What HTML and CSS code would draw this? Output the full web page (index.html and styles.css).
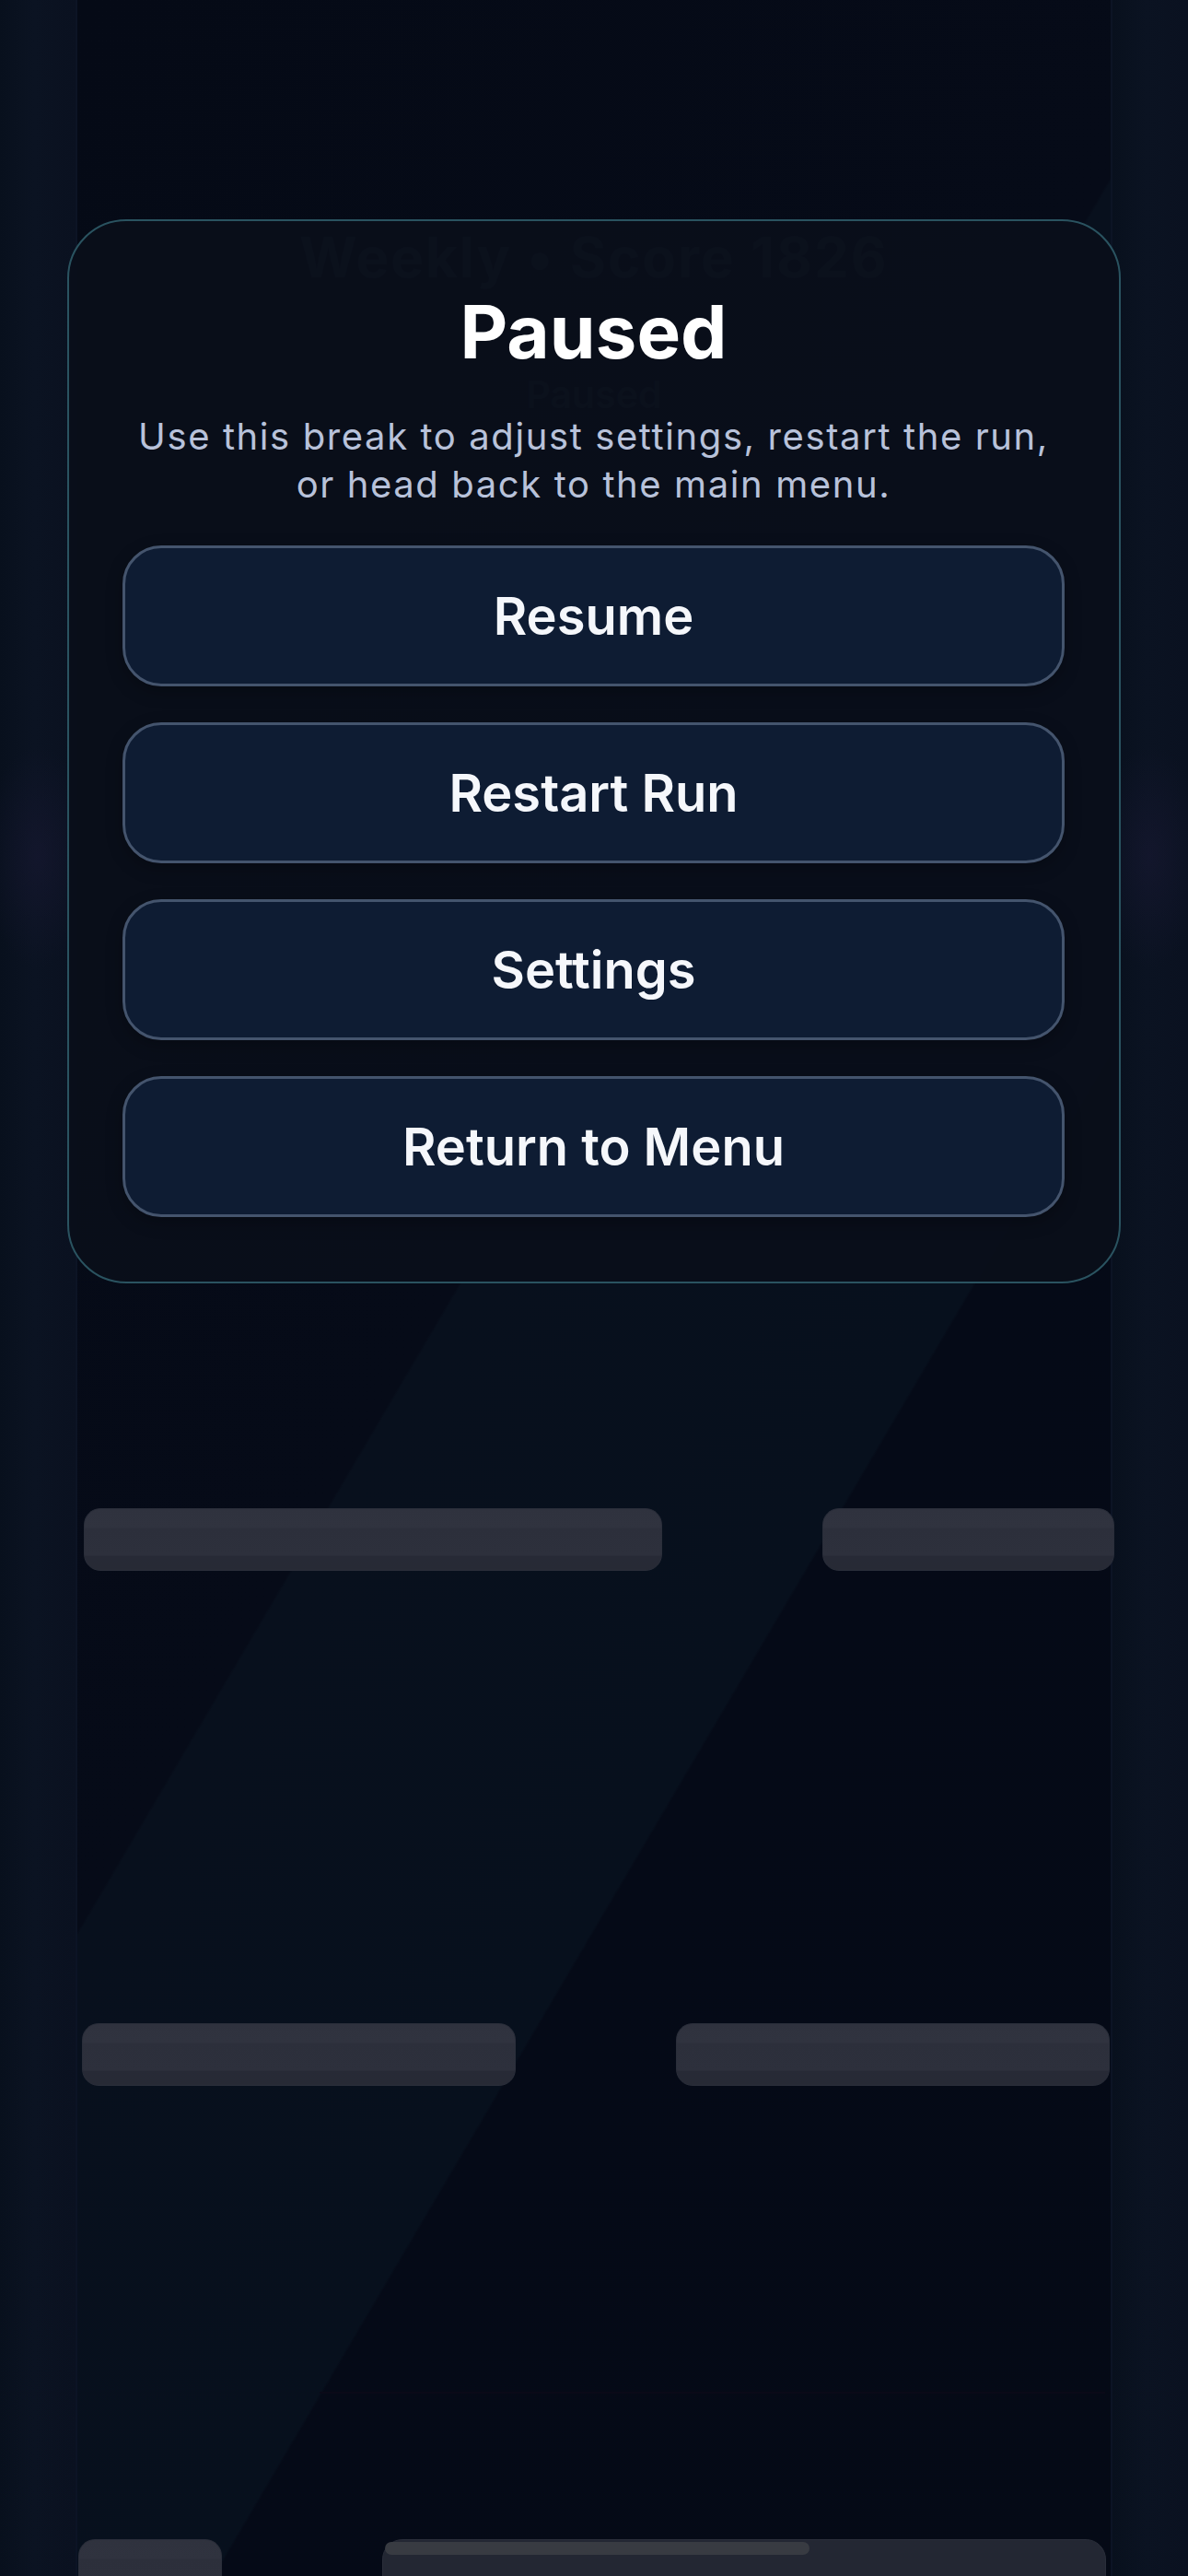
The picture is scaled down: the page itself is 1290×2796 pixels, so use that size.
FILE: index.html
```html
<!DOCTYPE html>
<html lang="en">
<head>
    <meta charset="UTF-8">
    <meta name="viewport" content="width=device-width, initial-scale=1.0">
    <title>Paused</title>
    <link rel="stylesheet" href="styles.css">
</head>
<body>
    <div class="game">
        <div class="rail rail-left"></div>
        <div class="board">
            <div class="hud">
                <div class="hud-score">Weekly • Score 1826</div>
                <div class="hud-state">Paused</div>
            </div>
            <div class="ground-line"></div>

            <div class="platform" style="left: 7px; top: 1637px; width: 628px;"></div>
            <div class="platform" style="left: 809px; top: 1637px; width: 317px;"></div>
            <div class="platform" style="left: 5px; top: 2196px; width: 471px;"></div>
            <div class="platform" style="left: 650px; top: 2196px; width: 471px;"></div>
            <div class="platform" style="left: 1px; top: 2756px; width: 156px;"></div>
            <div class="platform platform-wide" style="left: 331px; top: 2756px; width: 786px;">
                <div class="platform-shine"></div>
            </div>
        </div>
        <div class="rail rail-right"></div>
    </div>

    <div class="overlay">
        <div class="pause-card">
            <h1 class="pause-title">Paused</h1>
            <p class="pause-text">Use this break to adjust settings, restart the run, or head back to the main menu.</p>
            <div class="pause-actions">
                <button class="pause-btn">Resume</button>
                <button class="pause-btn">Restart Run</button>
                <button class="pause-btn">Settings</button>
                <button class="pause-btn">Return to Menu</button>
            </div>
        </div>
    </div>
</body>
</html>
```
FILE: styles.css
```css
html, body {
    margin: 0;
    padding: 0;
}
body {
    width: 1290px;
    height: 2796px;
    overflow: hidden;
    position: relative;
    background-color: #050a16;
    font-family: 'Inter', 'Noto Sans', sans-serif;
}

/* game scene behind the pause menu */
.game {
    display: flex;
    height: 100%;
}
.rail {
    width: 82px;
    flex-shrink: 0;
    background:
        radial-gradient(ellipse 60px 120px at 50% 930px, rgba(28, 26, 56, 0.45), transparent),
        linear-gradient(90deg, #08101d 0%, #0b1322 45%, #0a1120 100%);
}
.rail-left {
    border-right: 2px solid #0c1425;
}
.rail-right {
    border-left: 2px solid #0c1425;
}
.board {
    flex: 1;
    position: relative;
    background: linear-gradient(120.5deg,
        #050a16 0px, #060b18 1064px,
        #08101d 1067px, #07101d 1545px,
        #050a17 1548px, #050a16 100%);
}
.hud {
    position: absolute;
    top: 249px;
    left: 0;
    right: 0;
    text-align: center;
    color: #3e4759;
}
.hud-score {
    font-size: 60px;
    font-weight: 700;
    line-height: 60px;
    letter-spacing: 2px;
}
.hud-state {
    margin-top: 99px;
    font-size: 41px;
    font-weight: 600;
    line-height: 40px;
}
.ground-line {
    position: absolute;
    top: 2596px;
    left: 263px;
    right: 6px;
    height: 2px;
    background: #0a0a18;
}
.platform {
    position: absolute;
    height: 68px;
    border-radius: 18px;
    border: 1px solid #2a2e3a;
    box-sizing: border-box;
    background: linear-gradient(180deg,
        #2f323e 0px, #30333f 20px,
        #2c2f3b 21px, #2d303c 50px,
        #272a36 51px, #272a35 100%);
}
.platform-wide {
    height: 60px;
    border-radius: 22px 22px 0 0;
    background: #232733;
}
.platform-shine {
    margin: 2px 0 0 2px;
    width: 461px;
    height: 14px;
    border-radius: 8px;
    background: #383b42;
}

/* pause overlay */
.overlay {
    position: absolute;
    top: 0;
    left: 0;
    right: 0;
    bottom: 0;
    display: flex;
    justify-content: center;
    align-items: flex-start;
    padding-top: 238px;
}
.pause-card {
    width: 1144px;
    box-sizing: border-box;
    padding: 78px 59px 70px 58px;
    background: rgba(9, 15, 26, 0.96);
    border: 2px solid #2a5360;
    border-radius: 64px;
    text-align: center;
}
.pause-title {
    margin: 0;
    color: #ffffff;
    font-size: 80px;
    font-weight: 700;
    line-height: 84px;
}
.pause-text {
    margin: 46px 0 40px;
    padding: 0 8px;
    color: #b8c2da;
    font-size: 40px;
    line-height: 52px;
    letter-spacing: 1.6px;
}
.pause-actions {
    display: flex;
    flex-direction: column;
    gap: 39px;
}
.pause-btn {
    height: 153px;
    width: 100%;
    padding: 0;
    font-family: inherit;
    font-size: 56px;
    font-weight: 600;
    color: #f5f7fb;
    background-color: #0e1c33;
    border: 3px solid #44546d;
    border-radius: 42px;
    cursor: pointer;
    box-shadow: 0 6px 18px rgba(0, 0, 0, 0.25);
}
```
